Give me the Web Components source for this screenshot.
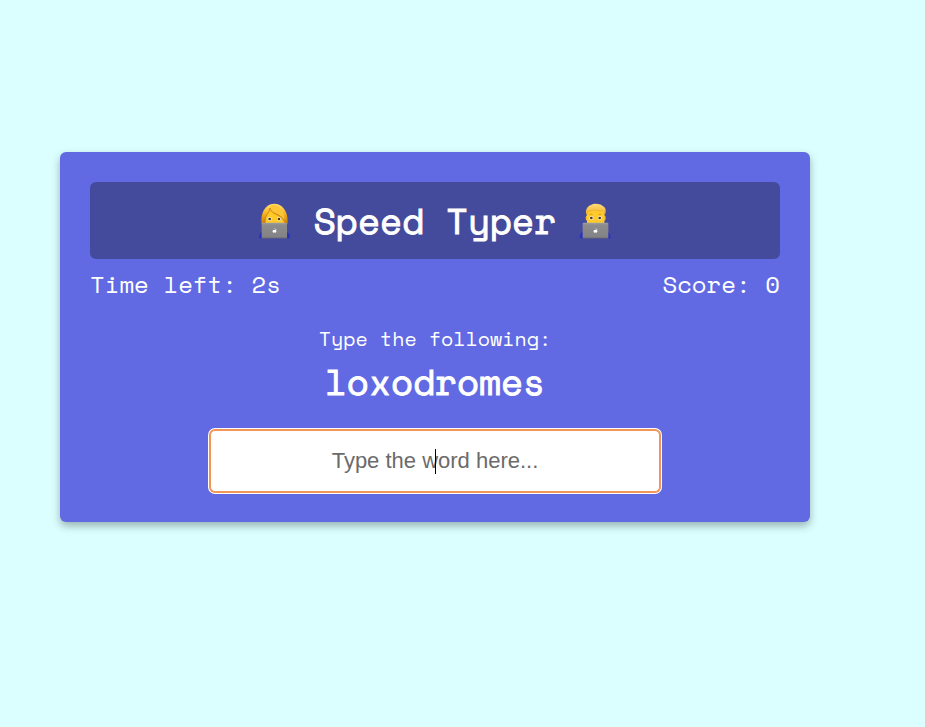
<!DOCTYPE html>
<html lang="en">
<head>
<meta charset="utf-8">
<meta name="viewport" content="width=device-width, initial-scale=1">
<title>Speed Typer</title>
<style>
  * { box-sizing: border-box; }
  body {
    margin: 0;
    min-height: 100vh;
    padding: 0 55px 53px 0;
    display: flex;
    align-items: center;
    justify-content: center;
    background: #dbffff;
    color: #fff;
    font-family: "Space Mono", "Liberation Mono", monospace;
  }
</style>
</head>
<body>
<game-card>
  <game-title slot="title">Speed Typer</game-title>
  <game-stats time="2s" score="0"></game-stats>
  <word-prompt word="loxodromes"></word-prompt>
</game-card>

<template id="card-template">
  <style>
    :host {
      display: block;
      box-sizing: border-box;
      width: 100%;
      max-width: 750px;
      padding: 30px;
      border-radius: 6px;
      background: #616ae3;
      box-shadow: 0 4px 8px rgba(0, 0, 0, .3);
    }
  </style>
  <slot name="title"></slot>
  <slot></slot>
</template>

<template id="title-template">
  <style>
    :host {
      display: flex;
      align-items: center;
      justify-content: center;
      gap: 23px;
      padding: 20px;
      border-radius: 6px;
      background: #444b9c;
    }
    h1 { margin: 0; font-size: 36px; line-height: 37px; font-weight: normal; -webkit-text-stroke: 1px currentColor; }
    svg { display: block; width: 33px; height: 37px; flex: none; }
  </style>
  <svg viewBox="24 20 99 111" aria-hidden="true">
    <defs>
      <linearGradient id="lid" x2="0" y2="1"><stop stop-color="#a1a1a3"/><stop offset=".15" stop-color="#8c8c8e"/><stop offset="1" stop-color="#828285"/></linearGradient>
      <linearGradient id="hair" x2="0" y2="1"><stop stop-color="#ffe071"/><stop offset=".4" stop-color="#fdbd26"/><stop offset="1" stop-color="#c57a06"/></linearGradient>
    </defs>
    <path d="M27 129q0-18 11-20h71q11 2 11 20z" fill="#2932bd"/>
    <path d="M35 87C31 60 41 26 73 25c31 1 43 34 39 62z" fill="url(#hair)"/>
    <path d="M47 84C44 68 50 58 61 46c10 12 28 14 38 24l4 14z" fill="#ffc928"/>
    <path d="M61 34c4 17 34 21 43 40-1-24-13-42-30-45-8-1-12 1-13 5z" fill="#ffc53a"/>
    <path d="M60 38q1 10 12 16 22 8 31 23" fill="none" stroke="#b9740f" stroke-width="2"/>
    <path d="M60 38q-2 12-9 20-7 9-7 24" fill="none" stroke="#b9740f" stroke-width="2"/>
    <ellipse cx="59" cy="71" rx="6" ry="6" fill="#fff4cf"/><ellipse cx="87" cy="71" rx="6" ry="6" fill="#fff4cf"/>
    <circle cx="59" cy="71" r="4" fill="#4e351b"/><circle cx="87" cy="71" r="4" fill="#4e351b"/>
    <rect x="35" y="82" width="76" height="47" rx="3" fill="url(#lid)"/>
    <path d="M36 127h74v2H36z" fill="#636367"/>
    <path d="M73 104c-6-2-7 5-3 8 2 1 3-1 6 0 3 0 3-3 4-4-4-1-3-3 0-4-2-2-4-1-7 0zm0-2q0-3 3-3-1 3-3 3z" fill="#fff"/>
  </svg>
  <h1><slot></slot></h1>
  <svg viewBox="30 20 99 111" aria-hidden="true">
    <defs>
      <linearGradient id="lid2" x2="0" y2="1"><stop stop-color="#a1a1a3"/><stop offset=".15" stop-color="#8c8c8e"/><stop offset="1" stop-color="#828285"/></linearGradient>
      <linearGradient id="hair2" x2="0" y2="1"><stop stop-color="#ffdf78"/><stop offset="1" stop-color="#efac28"/></linearGradient>
    </defs>
    <path d="M32 129q0-18 11-20h71q11 2 11 20z" fill="#2932bd"/>
    <ellipse cx="54" cy="68" rx="4" ry="8" fill="#f6bb2c"/><ellipse cx="106" cy="68" rx="4" ry="8" fill="#f6bb2c"/>
    <path d="M54 86V50q4-18 26-19 22 1 26 19v36z" fill="#ffca2c"/>
    <path d="M52 58c-4-13 2-25 14-29 8-6 26-5 34 2 11 5 12 15 8 27l-3-2-2-9q-15 0-26-3-8 3-19 3l-2 9z" fill="url(#hair2)"/>
    <path d="M58 48q10 0 18-4 12 4 26 3" fill="none" stroke="#dc9c23" stroke-width="1"/>
    <path d="M62 58q5-3 9 0m17 0q5-3 9 0" fill="none" stroke="#c58a1d" stroke-width="2"/>
    <ellipse cx="67" cy="68" rx="6" ry="6" fill="#fff4cf"/><ellipse cx="92" cy="68" rx="6" ry="6" fill="#fff4cf"/>
    <circle cx="67" cy="68" r="4" fill="#4e351b"/><circle cx="92" cy="68" r="4" fill="#4e351b"/>
    <rect x="41" y="82" width="77" height="47" rx="3" fill="url(#lid2)"/>
    <path d="M42 127h75v2H42z" fill="#636367"/>
    <path d="M79 104c-6-2-7 5-3 8 2 1 3-1 6 0 3 0 3-3 4-4-4-1-3-3 0-4-2-2-4-1-7 0zm0-2q0-3 3-3-1 3-3 3z" fill="#fff"/>
  </svg>
</template>

<template id="stats-template">
  <style>
    :host {
      display: flex;
      flex-wrap: wrap;
      justify-content: space-between;
      gap: 0 24px;
      padding-top: 7px;
      font-size: 24px;
      line-height: 36px;
    }
  </style>
  <div id="time"></div>
  <div id="score"></div>
</template>

<template id="prompt-template">
  <style>
    :host {
      display: flex;
      flex-direction: column;
      align-items: center;
      padding-top: 22px;
      text-align: center;
    }
    label { font-size: 20px; line-height: 30px; }
    h2 { margin: 0; padding: 3px 0 23px; font-size: 36px; line-height: 50px; font-weight: normal; -webkit-text-stroke: 1px currentColor; }
    .field { position: relative; width: 100%; max-width: 450px; }
    input {
      display: block;
      box-sizing: border-box;
      width: 100%;
      padding: 15px;
      border: 1px solid #f19558;
      border-radius: 5px;
      outline: 0;
      box-shadow: 0 0 0 1px #f19558, 0 0 0 2px #fff;
      background: #fff;
      color: #000;
      caret-color: transparent;
      font-family: "Liberation Sans", Arial, sans-serif;
      font-size: 22px;
      line-height: 30px;
      height: 62px;
      text-align: center;
    }
    input::placeholder { color: #6b6b6b; opacity: 1; }
    .caret {
      position: absolute;
      left: 50%;
      top: 19px;
      width: 1px;
      height: 25px;
      background: #000;
      pointer-events: none;
    }
    .caret[hidden] { display: none; }
  </style>
  <label for="answer">Type the following:</label>
  <h2></h2>
  <div class="field">
    <input id="answer" type="text" placeholder="Type the word here..." autocomplete="off">
    <span class="caret"></span>
  </div>
</template>

<script>
  class TemplateElement extends HTMLElement {
    constructor() {
      super();
      const source = document.getElementById(this.constructor.templateId);
      this.attachShadow({ mode: "open" }).append(source.content.cloneNode(true));
    }
  }

  class GameCard extends TemplateElement {
    static templateId = "card-template";
  }

  class GameTitle extends TemplateElement {
    static templateId = "title-template";
  }

  class GameStats extends TemplateElement {
    static templateId = "stats-template";
    connectedCallback() {
      this.shadowRoot.getElementById("time").textContent = `Time left: ${this.getAttribute("time")}`;
      this.shadowRoot.getElementById("score").textContent = `Score: ${this.getAttribute("score")}`;
    }
  }

  class WordPrompt extends TemplateElement {
    static templateId = "prompt-template";
    connectedCallback() {
      this.shadowRoot.querySelector("h2").textContent = this.getAttribute("word");
      const input = this.shadowRoot.querySelector("input");
      const caret = this.shadowRoot.querySelector(".caret");
      input.addEventListener("input", () => {
        caret.hidden = input.value !== "";
        input.style.caretColor = input.value ? "#000" : "transparent";
      });
    }
  }

  customElements.define("game-card", GameCard);
  customElements.define("game-title", GameTitle);
  customElements.define("game-stats", GameStats);
  customElements.define("word-prompt", WordPrompt);
</script>
</body>
</html>
